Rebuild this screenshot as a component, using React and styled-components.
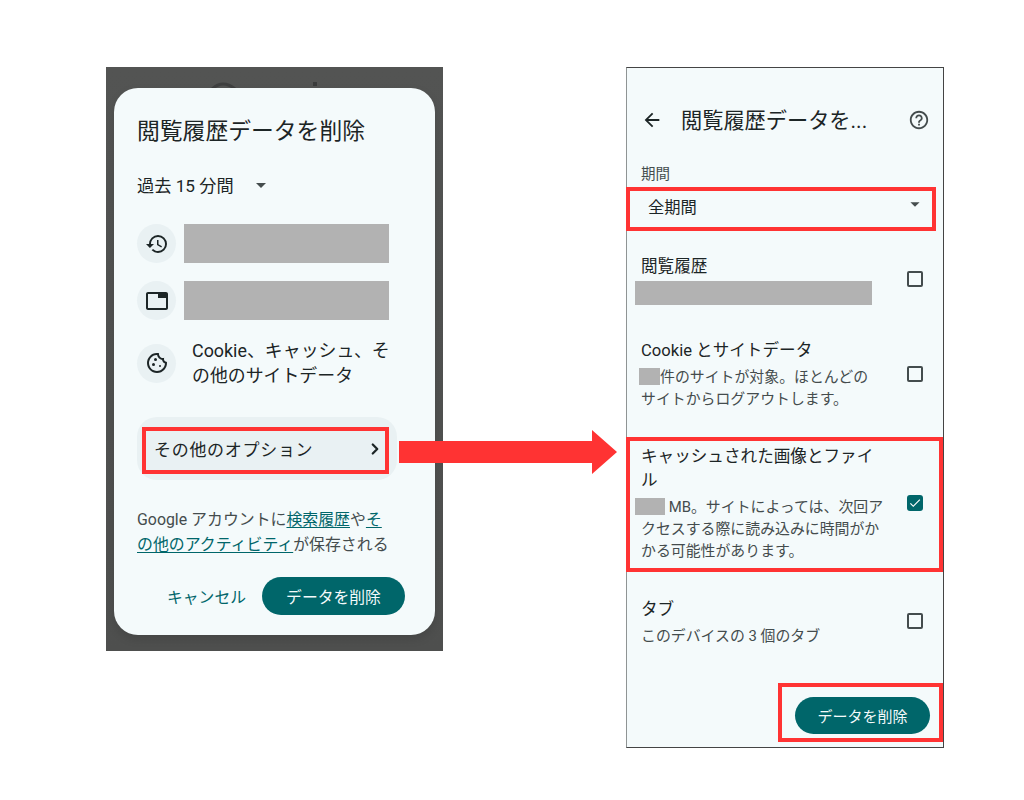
import styled, { createGlobalStyle } from 'styled-components'
import {
  MdArrowBack,
  MdArrowDropDown,
  MdCheck,
  MdHelpOutline,
  MdHistory,
  MdOutlineCookie,
  MdOutlineTab,
} from 'react-icons/md'
import { ChevronRight } from 'lucide-react'

const teal = '#00666a'
const paper = '#f4fafb'
const ink = '#1c2526'
const muted = '#444c4d'
const mask = '#b2b2b2'
const red = '#ff3333'

const GlobalStyle = createGlobalStyle`
  html, body {
    margin: 0;
    background: #fff;
  }
  body {
    font-family: Roboto, 'Noto Sans CJK JP', sans-serif;
    color: ${ink};
  }
`

export default function App() {
  return (
    <>
      <GlobalStyle />
      <Page>
        <DimmedPhone>
          <BackdropMark viewBox="0 0 120 14" aria-hidden="true">
            <path d="M6 12Q17 2 29 12" fill="none" stroke="#3f4040" strokeWidth="3" />
            <rect x="107" y="5" width="4" height="4" fill="#3a3b3b" />
          </BackdropMark>
          <Dialog>
            <DialogTitle>閲覧履歴データを削除</DialogTitle>
            <RangePicker>
              過去 15 分間
              <MdArrowDropDown size={24} color="#444c4d" />
            </RangePicker>

            <SummaryRow>
              <IconDisc><MdHistory size={24} /></IconDisc>
              <MaskBar />
            </SummaryRow>
            <SummaryRow>
              <IconDisc><MdOutlineTab size={24} /></IconDisc>
              <MaskBar />
            </SummaryRow>
            <CookieRow>
              <IconDisc><MdOutlineCookie size={24} /></IconDisc>
              <SummaryText>
                Cookie、キャッシュ、そ<br />の他のサイトデータ
              </SummaryText>
            </CookieRow>

            <OptionsTrack>
              <OptionsButton>
                その他のオプション
                <ChevronRight size={18} strokeWidth={3} />
              </OptionsButton>
            </OptionsTrack>

            <Notice>
              Google アカウントに<a>検索履歴</a>や<a>そ</a><br />
              <a>の他のアクティビティ</a>が保存される
            </Notice>

            <DialogActions>
              <TextButton>キャンセル</TextButton>
              <DeleteButton $wide>データを削除</DeleteButton>
            </DialogActions>
          </Dialog>
        </DimmedPhone>

        <FlowArrow viewBox="0 0 218 44" aria-hidden="true">
          <path d="M0 11h193V0l25 22-25 22V33H0z" fill={red} />
        </FlowArrow>

        <SettingsPhone>
          <Header>
            <MdArrowBack size={22} />
            <HeaderTitle>閲覧履歴データを...</HeaderTitle>
            <MdHelpOutline size={22} color="#444c4d" />
          </Header>

          <FieldLabel>期間</FieldLabel>
          <PeriodSelect>
            全期間
            <MdArrowDropDown size={22} color="#444c4d" />
          </PeriodSelect>

          <OptionRow $height={95}>
            <OptionBody>
              <OptionTitle>閲覧履歴</OptionTitle>
              <WideMask />
            </OptionBody>
            <Checkbox />
          </OptionRow>

          <OptionRow $height={95}>
            <OptionBody>
              <OptionTitle>Cookie とサイトデータ</OptionTitle>
              <OptionDetail>
                <InlineMask $width={21} />件のサイトが対象。ほとんどの<br />
                サイトからログアウトします。
              </OptionDetail>
            </OptionBody>
            <Checkbox />
          </OptionRow>

          <OptionRow $height={135} $top={16} $marked>
            <OptionBody>
              <OptionTitle>キャッシュされた画像とファイ<br />ル</OptionTitle>
              <OptionDetail>
                <InlineMask $width={30} $pull /> MB。サイトによっては、次回ア<br />
                クセスする際に読み込みに時間がか<br />
                かる可能性があります。
              </OptionDetail>
            </OptionBody>
            <Checkbox $checked>
              <MdCheck size={14} color="#fff" />
            </Checkbox>
          </OptionRow>

          <OptionRow $height={98}>
            <OptionBody>
              <OptionTitle>タブ</OptionTitle>
              <OptionDetail>このデバイスの 3 個のタブ</OptionDetail>
            </OptionBody>
            <Checkbox />
          </OptionRow>

          <FooterBox>
            <DeleteButton>データを削除</DeleteButton>
          </FooterBox>
        </SettingsPhone>
      </Page>
    </>
  )
}

const Page = styled.main`
  position: relative;
  width: 1024px;
  height: 800px;
  box-sizing: border-box;
  padding: 67px 80px 0 106px;
  display: flex;
  justify-content: space-between;
  align-items: flex-start;
`

const DimmedPhone = styled.section`
  position: relative;
  width: 337px;
  height: 584px;
  box-sizing: border-box;
  padding: 21px 8px 0;
  background: linear-gradient(#535453, #4e4f4e);
`

const BackdropMark = styled.svg`
  position: absolute;
  left: 100px;
  top: 10px;
  width: 120px;
  height: 14px;
`

const Dialog = styled.div`
  position: relative;
  width: 321px;
  height: 547px;
  box-sizing: border-box;
  padding: 28px 23px 0;
  background: ${paper};
  border-radius: 24px;
  box-shadow: 0 4px 10px rgba(0, 0, 0, 0.12);
`

const DialogTitle = styled.h2`
  margin: 0;
  font-size: 22.8px;
  line-height: 32px;
  font-weight: 400;
`

const RangePicker = styled.div`
  margin: 23px 0 27px;
  height: 26px;
  display: flex;
  align-items: center;
  gap: 15px;
  font-size: 17.2px;
  white-space: pre;

  svg {
    margin-top: 1px;
  }
`

const SummaryRow = styled.div`
  margin-top: 18px;
  display: flex;
  align-items: center;
  gap: 8px;
`

const CookieRow = styled.div`
  margin-top: 18px;
  display: flex;
  align-items: center;
  gap: 16px;
`

const IconDisc = styled.span`
  width: 39px;
  height: 39px;
  flex: none;
  border-radius: 50%;
  background: #e9f1f3;
  color: ${ink};
  display: flex;
  align-items: center;
  justify-content: center;
`

const MaskBar = styled.div`
  width: 205px;
  height: 39px;
  background: ${mask};
`

const SummaryText = styled.p`
  margin: 0;
  font-size: 17.9px;
  line-height: 25px;
  white-space: nowrap;
`

const OptionsTrack = styled.div`
  margin-top: 29px;
  width: 260px;
  height: 63px;
  box-sizing: border-box;
  padding: 10px 8px 6px 5px;
  border-radius: 20px;
  background: #e9f1f3;
`

const OptionsButton = styled.div`
  height: 47px;
  box-sizing: border-box;
  border: 4px solid ${red};
  padding: 0 1px 4px 8px;
  display: flex;
  align-items: center;
  justify-content: space-between;
  font-size: 17px;
  letter-spacing: 0.7px;
  white-space: nowrap;
`

const Notice = styled.p`
  margin: 27px 0 0;
  font-size: 15.9px;
  line-height: 25px;
  color: ${muted};
  white-space: nowrap;

  a {
    color: ${teal};
    text-decoration: underline;
    text-underline-offset: 2px;
  }
`

const DialogActions = styled.div`
  margin-top: 20px;
  display: flex;
  align-items: center;
  gap: 16px;
  padding-left: 30px;
`

const TextButton = styled.button`
  border: 0;
  padding: 0;
  background: none;
  color: ${teal};
  font: inherit;
  font-size: 15.8px;
`

const DeleteButton = styled.button`
  width: ${props => (props.$wide ? 143 : 135)}px;
  height: ${props => (props.$wide ? 38 : 37)}px;
  border: 0;
  padding: 0;
  border-radius: 20px;
  background: ${teal};
  color: #f4fafb;
  font: inherit;
  font-size: ${props => (props.$wide ? 15.8 : 15)}px;
`

const FlowArrow = styled.svg`
  position: absolute;
  left: 399px;
  top: 430px;
  width: 218px;
  height: 44px;
`

const SettingsPhone = styled.section`
  width: 318px;
  height: 681px;
  box-sizing: border-box;
  padding-top: 34px;
  background: ${paper};
  border: 1px solid #444;
  border-left-color: #8f9494;
`

const Header = styled.header`
  height: 36px;
  display: flex;
  align-items: center;
  padding: 0 13px 0 14px;

  svg {
    flex: none;
  }
`

const HeaderTitle = styled.h2`
  flex: 1;
  margin: -4px 0 0 18px;
  font-size: 21.2px;
  font-weight: 400;
  white-space: nowrap;
`

const FieldLabel = styled.div`
  margin: 27px 0 2px 14px;
  font-size: 14.5px;
  line-height: 20px;
  color: ${muted};
`

const PeriodSelect = styled.div`
  height: 44px;
  width: 310px;
  box-sizing: border-box;
  margin-left: -1px;
  border: 4px solid ${red};
  padding: 0 6px 6px 18px;
  display: flex;
  align-items: center;
  justify-content: space-between;
  font-size: 16.3px;

  svg {
    margin-top: -4px;
  }
`

const OptionRow = styled.div`
  height: ${props => props.$height}px;
  box-sizing: border-box;
  margin-top: ${props => props.$top || 0}px;
  padding: 0 20px ${props => (props.$marked ? 4 : 0)}px 14px;
  display: flex;
  align-items: center;
  justify-content: space-between;
  ${props => props.$marked && `
    margin-left: -1px;
    padding-left: 15px;
    outline: 4px solid ${red};
    outline-offset: -4px;
  `}
`

const OptionBody = styled.div`
  min-width: 0;
  padding-top: 2px;
`

const OptionTitle = styled.div`
  font-size: 16.6px;
  line-height: 24px;
  white-space: nowrap;
`

const OptionDetail = styled.div`
  margin-top: 3px;
  font-size: 14.9px;
  line-height: 22px;
  color: ${muted};
  white-space: nowrap;
`

const WideMask = styled.div`
  width: 237px;
  height: 24px;
  margin: 2px 0 0 -6px;
  background: ${mask};
`

const InlineMask = styled.span`
  display: inline-block;
  width: ${props => props.$width}px;
  height: 17px;
  margin-left: ${props => (props.$pull ? -6 : -2)}px;
  vertical-align: -3px;
  background: ${mask};
`

const Checkbox = styled.span`
  width: 16px;
  height: 16px;
  flex: none;
  border: ${props => (props.$checked ? 0 : `2px solid ${muted}`)};
  border-radius: ${props => (props.$checked ? 3 : 2)}px;
  box-sizing: border-box;
  background: ${props => (props.$checked ? teal : 'transparent')};
  display: flex;
  align-items: center;
  justify-content: center;
`

const FooterBox = styled.div`
  width: 165px;
  height: 59px;
  box-sizing: border-box;
  margin: 13px 0 0 auto;
  border: 4px solid ${red};
  display: flex;
  align-items: center;
  justify-content: flex-end;
  padding: 6px 9px 0 0;
`
